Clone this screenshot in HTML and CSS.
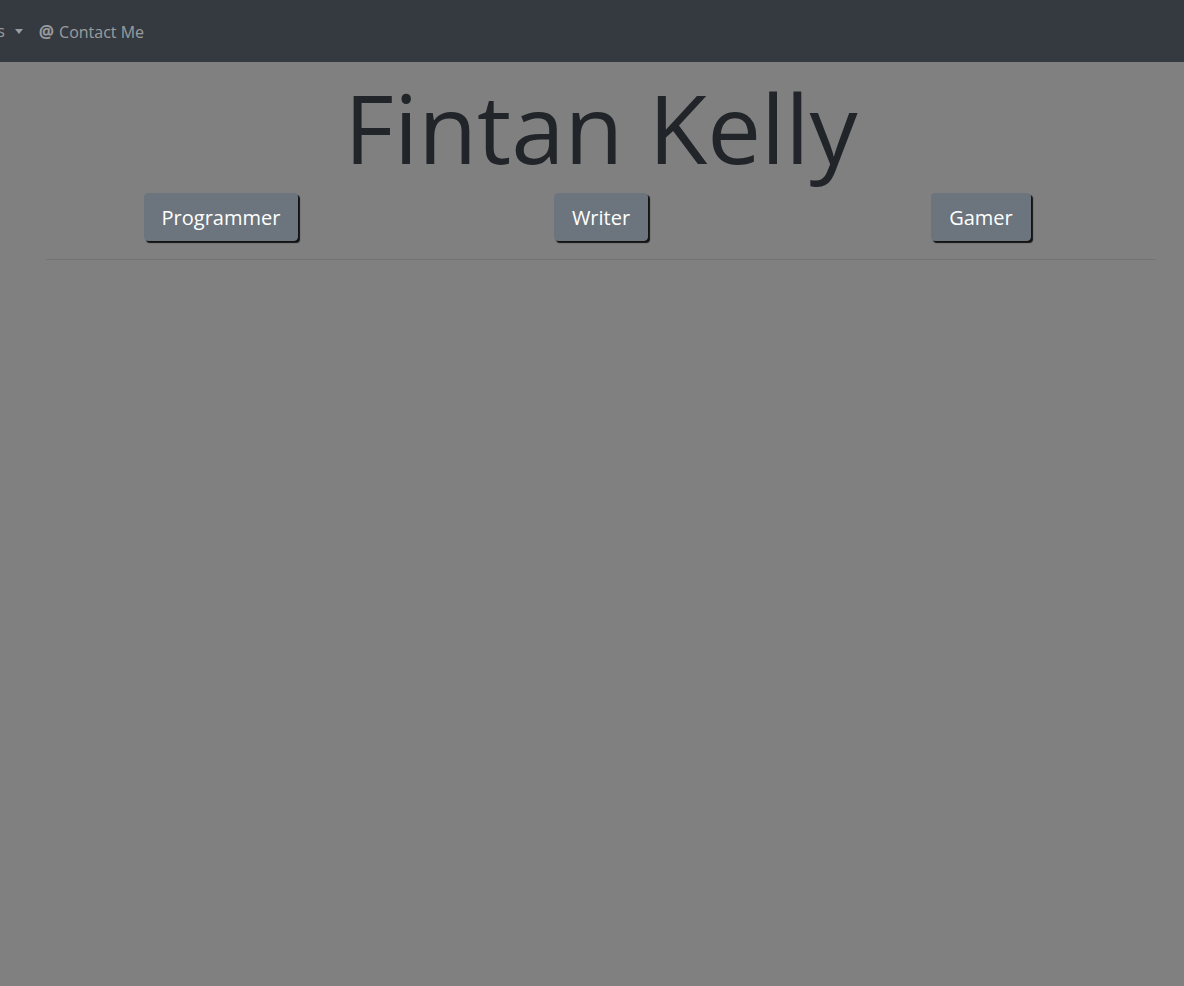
FILE: index.html
```html
<!DOCTYPE html>
<html lang="en">
<head>
<meta charset="utf-8">
<title>Fintan Kelly</title>
<link rel="stylesheet" href="styles.css">
</head>
<body>
<nav class="navbar">
  <ul class="nav-list">
    <li class="nav-item"><a class="nav-link dropdown-toggle" href="#">Projects</a></li>
    <li class="nav-item"><a class="nav-link" href="#"><span class="at">@</span> Contact Me</a></li>
  </ul>
</nav>
<main class="container">
  <h1 class="display">Fintan Kelly</h1>
  <div class="row">
    <div class="col"><button class="btn">Programmer</button></div>
    <div class="col"><button class="btn">Writer</button></div>
    <div class="col"><button class="btn">Gamer</button></div>
  </div>
  <hr class="divider">
</main>
</body>
</html>
```
FILE: styles.css
```css
html, body {
  margin: 0;
  padding: 0;
}
body {
  background: #808080;
  font-family: "Open Sans", "Liberation Sans", sans-serif;
  color: #212529;
  font-size: 16px;
  line-height: 1.5;
  min-height: 986px;
  overflow: hidden;
}
.navbar {
  background: #343a40;
  height: 62px;
  display: flex;
  align-items: center;
  overflow: hidden;
}
.nav-list {
  list-style: none;
  display: flex;
  margin: 2px 0 0 -63px;
  padding: 0;
}
.nav-link {
  display: flex;
  align-items: center;
  padding: 8px;
  color: rgba(255, 255, 255, 0.5);
  text-decoration: none;
  white-space: nowrap;
}
.dropdown-toggle::after {
  content: "";
  display: inline-block;
  margin-left: 10px;
  border-top: 5px solid;
  border-left: 4px solid transparent;
  border-right: 4px solid transparent;
}
.at {
  font-weight: 700;
  font-size: 17px;
  margin-right: 5px;
}
.container {
  width: 1110px;
  margin-left: 46px;
}
.display {
  margin: 7px 0 0;
  font-size: 96px;
  font-weight: 400;
  line-height: 1.2;
  text-align: center;
  color: #212529;
}
.row {
  display: flex;
  margin: 9px -15px 0;
}
.col {
  flex: 1;
  text-align: center;
  padding: 0 15px;
}
.btn {
  font-family: "Open Sans", "Liberation Sans", sans-serif;
  font-size: 20px;
  line-height: 30px;
  padding: 9px 17px 7px;
  border: 1px solid #6c757d;
  border-radius: 4px;
  background: #6c757d;
  color: #fff;
  box-shadow: 2px 2px 1px rgba(0, 0, 0, 0.85);
  cursor: pointer;
  vertical-align: top;
}
.divider {
  margin: 18px 0 0;
  border: 0;
  border-top: 1px solid rgba(0, 0, 0, 0.1);
}
```
